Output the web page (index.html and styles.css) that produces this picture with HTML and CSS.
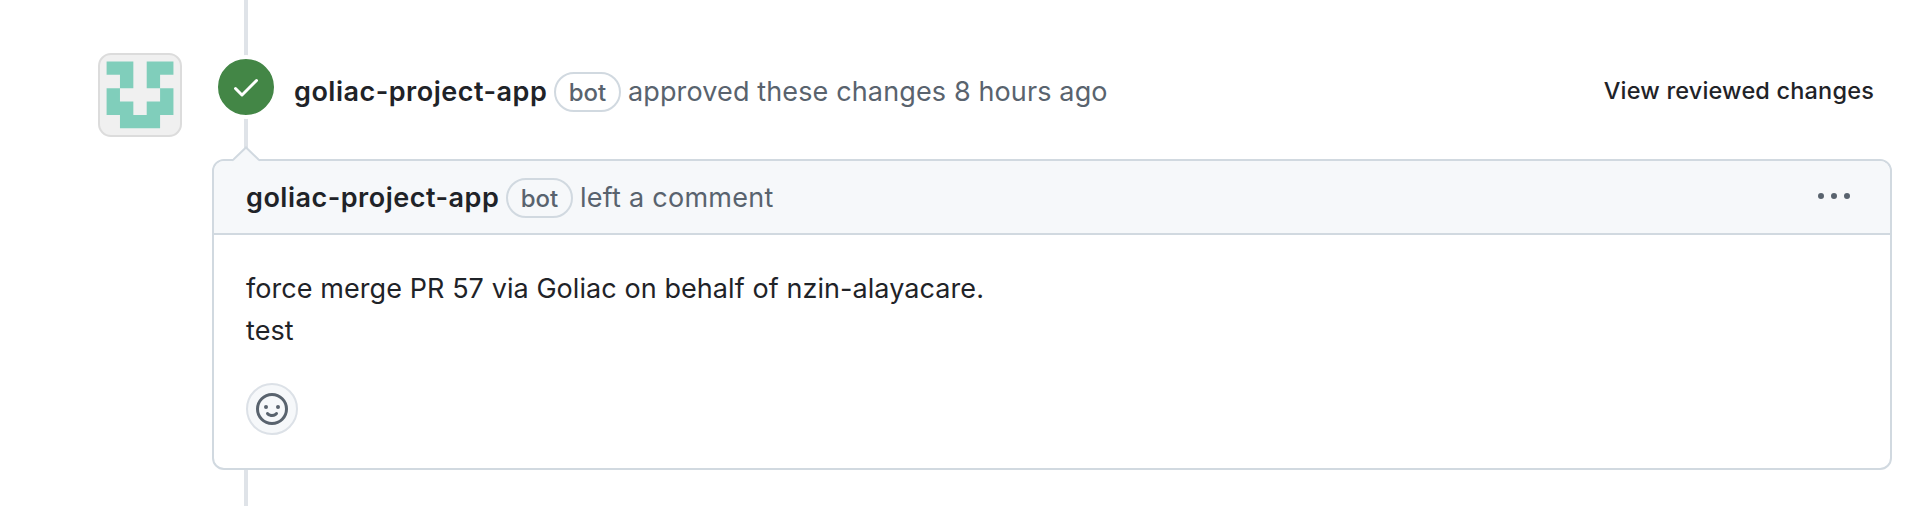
FILE: index.html
```
<!DOCTYPE html>
<html lang="en">
<head>
<meta charset="utf-8">
<title>Review</title>
<link rel="stylesheet" href="styles.css">
</head>
<body>
<main class="timeline">
  <div class="event">
    <svg class="avatar" viewBox="0 0 84 84" aria-hidden="true">
      <rect x="1" y="1" width="82" height="82" rx="12" fill="#f0f0f0" stroke="#dcdcdc" stroke-width="2"/>
      <path transform="translate(8.6 8.5) scale(13.37)" fill="#80cebb" d="M0 0h2v2h-1v-1h-1zM3 0h2v1h-1v1h-1zM0 2h1v1h1v1h1v-1h1v-1h1v2h-1v1h-3v-1h-1z"/>
    </svg>
    <span class="badge">
      <svg width="32" height="32" viewBox="0 0 16 16" fill="#fff" aria-hidden="true"><path d="M13.78 4.22a.75.75 0 0 1 0 1.06l-7.25 7.25a.75.75 0 0 1-1.06 0L2.22 9.28a.751.751 0 0 1 .018-1.042.751.751 0 0 1 1.042-.018L6 10.94l6.72-6.72a.75.75 0 0 1 1.06 0Z"/></svg>
    </span>
    <div class="summary">
      <strong class="author">goliac-project-app</strong>
      <span class="label">bot</span>
      <span class="muted approved">approved these changes 8 hours ago</span>
    </div>
    <a class="view">View reviewed changes</a>
  </div>
  <article class="comment">
    <svg class="caret" width="32" height="16" viewBox="0 0 32 16" aria-hidden="true"><path d="M1 16 3 14.500 16 1.500 29 14.500 31 16z" fill="#f6f8fa"/><path d="M2 14.500 3.500 13.500 16 1.500 28.500 13.500 30 14.500" fill="none" stroke="#d1d9e0" stroke-width="2"/></svg>
    <header class="comment-head">
      <strong class="author">goliac-project-app</strong>
      <span class="label">bot</span>
      <span class="muted left">left a comment</span>
      <svg class="menu" width="32" height="32" viewBox="0 0 16 16" fill="#59636e" aria-hidden="true"><path d="M8 9a1.500 1.500 0 1 0 0-3 1.500 1.500 0 0 0 0 3ZM1.500 9a1.500 1.500 0 1 0 0-3 1.500 1.500 0 0 0 0 3Zm13 0a1.500 1.500 0 1 0 0-3 1.500 1.500 0 0 0 0 3Z"/></svg>
    </header>
    <div class="comment-body">
      <p class="text">force merge PR 57 via Goliac on behalf of nzin-alayacare.<br>test</p>
      <button class="react" aria-label="Add reaction">
        <svg width="32" height="32" viewBox="0 0 16 16" fill="#59636e" aria-hidden="true"><path d="M8 0a8 8 0 1 1 0 16A8 8 0 0 1 8 0ZM1.500 8a6.500 6.500 0 1 0 13 0 6.500 6.500 0 0 0-13 0Zm3.820 1.636a.75.75 0 0 1 1.038.175l.007.009c.103.118.22.222.35.310.264.178.683.370 1.285.370.602 0 1.020-.192 1.285-.371.130-.088.247-.192.350-.310l.007-.008a.75.75 0 0 1 1.222.870l-.022-.015c.020.013.021.015.021.015v.001l-.001.002-.002.003-.005.007-.014.019a2.066 2.066 0 0 1-.184.213c-.160.166-.338.316-.530.445-.630.418-1.370.638-2.127.629-.946 0-1.652-.308-2.126-.630a3.331 3.331 0 0 1-.715-.657l-.014-.020-.005-.006-.002-.003v-.002h-.001l.613-.432-.614.430a.75.75 0 0 1 .183-1.044ZM12 7a1 1 0 1 1-2 0 1 1 0 0 1 2 0ZM5 8a1 1 0 1 1 0-2 1 1 0 0 1 0 2Z"/></svg>
      </button>
    </div>
  </article>
</main>
</body>
</html>
```
FILE: styles.css
```
* { box-sizing: border-box; }
body {
  margin: 0;
  background: #fff;
  color: #1f2328;
  font-family: Inter, "Liberation Sans", sans-serif;
  font-size: 27px;
}
.timeline {
  position: relative;
  height: 506px;
  overflow: hidden;
  padding: 53px 26px 0 98px;
}
.timeline::before {
  content: "";
  position: absolute;
  top: 0;
  bottom: 0;
  left: 244px;
  width: 4px;
  background: #dfe3e8;
}
.event {
  position: relative;
  display: flex;
  align-items: flex-start;
  height: 106px;
}
.avatar { width: 84px; height: 84px; flex: none; }
.badge {
  display: flex;
  align-items: center;
  justify-content: center;
  flex: none;
  width: 64px;
  height: 64px;
  margin: 2px 0 0 32px;
  border: 4px solid #fff;
  border-radius: 50%;
  background: #438646;
}
.summary {
  display: flex;
  align-items: center;
  flex: 1;
  height: 38px;
  margin: 19px 0 0 16px;
}
.author {
  width: 253px;
  font-weight: 600;
  letter-spacing: 0.5px;
  white-space: nowrap;
}
.label {
  position: relative;
  top: 1px;
  flex: none;
  width: 67px;
  height: 40px;
  margin: 0 7px;
  border: 2px solid #d1d9e0;
  border-radius: 20px;
  color: #59636e;
  font-size: 24px;
  font-weight: 500;
  line-height: 37px;
  text-align: center;
}
.muted { color: #59636e; white-space: nowrap; }
.approved { letter-spacing: 0.13px; }
.left { letter-spacing: 0.25px; }
.view {
  margin: 22px 18px 0 0;
  font-size: 23.500px;
  font-weight: 500;
  line-height: 32px;
  letter-spacing: 0.18px;
  white-space: nowrap;
}
.comment {
  position: relative;
  height: 311px;
  margin-left: 114px;
  border: 2px solid #d1d9e0;
  border-radius: 12px;
  background: #fff;
}
.caret { position: absolute; left: 16px; top: -15px; }
.comment-head {
  display: flex;
  align-items: center;
  height: 74px;
  padding: 0 40px 0 32px;
  border-bottom: 2px solid #d1d9e0;
  border-radius: 10px 10px 0 0;
  background: #f6f8fa;
}
.menu { margin-left: auto; }
.comment-body { padding: 33px 32px 32px; }
.text { margin: 0; line-height: 42px; letter-spacing: 0.07px; }
.react {
  display: flex;
  align-items: center;
  justify-content: center;
  width: 52px;
  height: 52px;
  margin-top: 31px;
  padding: 0;
  border: 2px solid #dce1e7;
  border-radius: 50%;
  background: #f6f8fa;
}
```
